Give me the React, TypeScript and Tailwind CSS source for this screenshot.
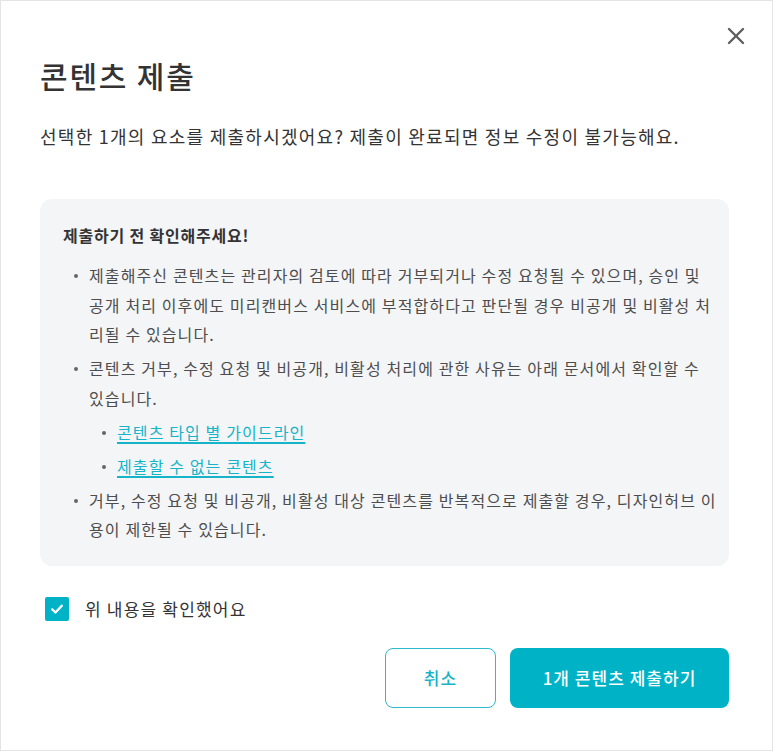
import React, { useState } from 'react';

const FONT = { fontFamily: '"Noto Sans CJK KR", "Noto Sans", sans-serif' };

const CloseIcon = () => (
  <svg width="20" height="20" viewBox="0 0 20 20" fill="none">
    <path d="M3 3L17 17M17 3L3 17" stroke="#5f5f5f" strokeWidth="2.4" strokeLinecap="round" />
  </svg>
);

const CheckIcon = () => (
  <svg width="16" height="16" viewBox="0 0 16 16" fill="none">
    <path d="M3.2 8.4L6.5 11.5L12.8 4.8" stroke="white" strokeWidth="2.4" strokeLinecap="round" strokeLinejoin="round" />
  </svg>
);

const Bullet = ({ children, sub = false }: { children: React.ReactNode; sub?: boolean }) => (
  <li className={`flex ${sub ? 'pl-[28px]' : ''}`}>
    <span className="w-[26px] shrink-0 flex justify-start pl-[11px] leading-[29.5px]">
      <span className="mt-[13px] w-[4px] h-[4px] rounded-full bg-[#666]" />
    </span>
    <div className="flex-1">{children}</div>
  </li>
);

// lines broken as in the design
const Lines = ({ lines }: { lines: string[] }) => (
  <>
    {lines.map((l, i) => (
      <span key={i} className="block whitespace-nowrap">
        {l}
      </span>
    ))}
  </>
);

export default function App() {
  const [checked, setChecked] = useState(true);

  return (
    <div
      className="relative w-[773px] h-[751px] bg-white border border-[#e4e4e4] pl-[39px] pr-[43px] pt-[51px]"
      style={FONT}
    >
      <button className="absolute top-[25px] right-[26px] p-0">
        <CloseIcon />
      </button>

      <h1 className="text-[30px] leading-[46px] font-medium text-[#333] tracking-[0.06em]">콘텐츠 제출</h1>
      <p className="mt-[24px] text-[18px] leading-[28px] text-[#333] tracking-[0.07em]">
        선택한 1개의 요소를 제출하시겠어요? 제출이 완료되면 정보 수정이 불가능해요.
      </p>

      <div className="mt-[49px] rounded-[12px] bg-[#f4f5f7] pl-[23px] pr-[22px] pt-[24px] pb-[21px]">
        <h2 className="text-[16px] leading-[24px] font-semibold text-[#333] tracking-[0.05em]">제출하기 전 확인해주세요!</h2>
        <ul className="mt-[14px] flex flex-col gap-[4.5px] text-[16px] leading-[29.5px] text-[#4d4d4d] tracking-[0.07em]">
          <Bullet>
            <Lines
              lines={[
                '제출해주신 콘텐츠는 관리자의 검토에 따라 거부되거나 수정 요청될 수 있으며, 승인 및',
                '공개 처리 이후에도 미리캔버스 서비스에 부적합하다고 판단될 경우 비공개 및 비활성 처',
                '리될 수 있습니다.',
              ]}
            />
          </Bullet>
          <Bullet>
            <Lines
              lines={[
                '콘텐츠 거부, 수정 요청 및 비공개, 비활성 처리에 관한 사유는 아래 문서에서 확인할 수',
                '있습니다.',
              ]}
            />
          </Bullet>
          <Bullet sub>
            <a className="text-[#16b4c8] underline underline-offset-[3px] decoration-[1.5px]" href="#">
              콘텐츠 타입 별 가이드라인
            </a>
          </Bullet>
          <Bullet sub>
            <a className="text-[#16b4c8] underline underline-offset-[3px] decoration-[1.5px]" href="#">
              제출할 수 없는 콘텐츠
            </a>
          </Bullet>
          <Bullet>
            <Lines
              lines={[
                '거부, 수정 요청 및 비공개, 비활성 대상 콘텐츠를 반복적으로 제출할 경우, 디자인허브 이',
                '용이 제한될 수 있습니다.',
              ]}
            />
          </Bullet>
        </ul>
      </div>

      <label className="mt-[31px] ml-[5px] flex items-center gap-[16px] cursor-pointer select-none">
        <span
          onClick={() => setChecked(!checked)}
          className={`w-[24px] h-[24px] rounded-[2px] flex items-center justify-center ${
            checked ? 'bg-[#00b2c6]' : 'bg-white border border-[#ccc]'
          }`}
        >
          {checked && <CheckIcon />}
        </span>
        <span className="text-[17px] leading-[24px] text-[#333] tracking-[0.07em]">위 내용을 확인했어요</span>
      </label>

      <div className="mt-[27px] flex justify-end gap-[14px]">
        <button className="w-[111px] h-[60px] rounded-[8px] border-[1.5px] border-[#2bbad0] bg-white text-[17px] font-medium text-[#16b4c8] tracking-[0.06em]">
          취소
        </button>
        <button className="w-[219px] h-[60px] rounded-[8px] bg-[#00b2c6] text-[17px] font-medium text-white tracking-[0.06em]">
          1개 콘텐츠 제출하기
        </button>
      </div>
    </div>
  );
}
